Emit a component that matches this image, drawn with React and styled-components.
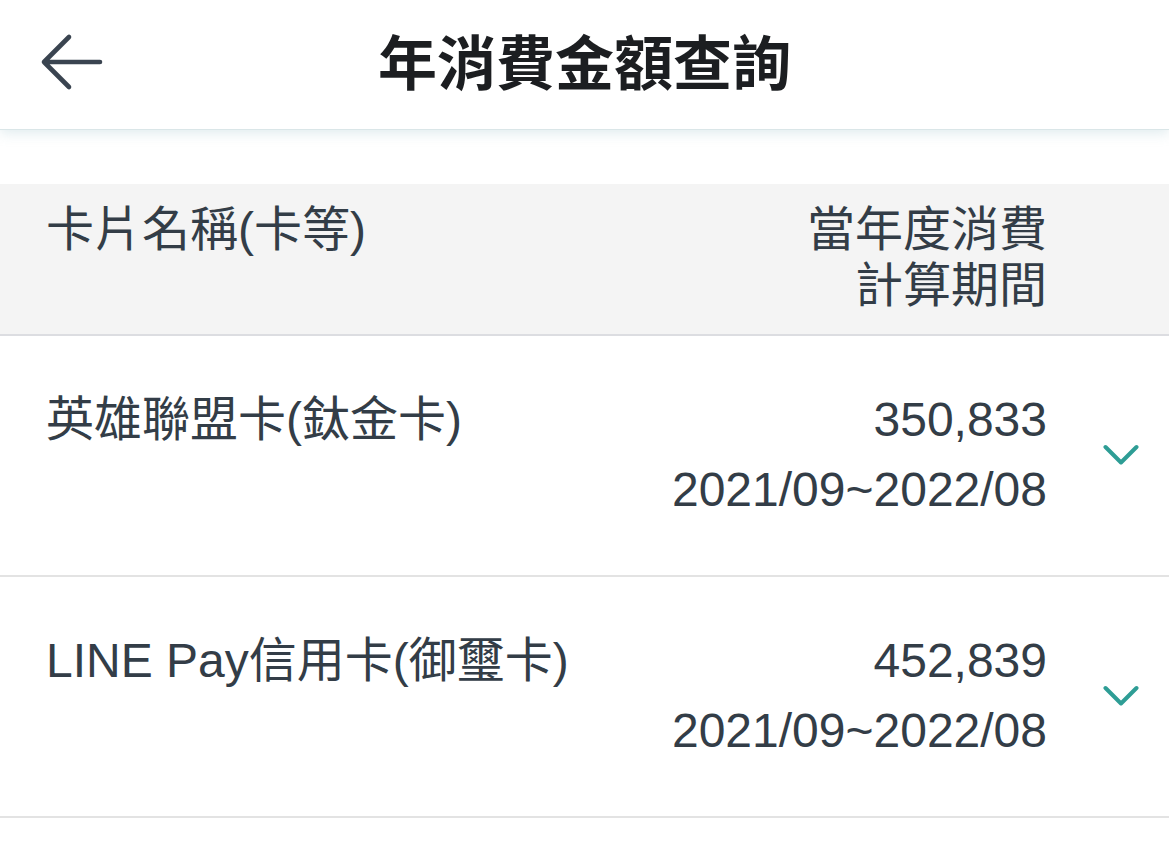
import React from 'react';
import styled, { createGlobalStyle } from 'styled-components';

const GlobalStyle = createGlobalStyle`
  html, body {
    margin: 0;
    padding: 0;
    background: #ffffff;
  }
  body {
    font-family: "Liberation Sans", "Noto Sans CJK TC", sans-serif;
    color: #333d47;
  }
`;

const Page = styled.div`
  width: 100%;
  min-height: 845px;
  background: #ffffff;
`;

const TopBar = styled.header`
  position: relative;
  z-index: 1;
  height: 129px;
  box-sizing: border-box;
  padding-bottom: 10px;
  display: grid;
  grid-template-columns: 122px 1fr 122px;
  align-items: center;
  background: #ffffff;
  box-shadow: 0 1px 0 #dae6e8, 0 4px 12px rgba(150, 190, 198, 0.3);
`;

const BackButton = styled.button`
  justify-self: start;
  margin: 4px 0 0 38px;
  padding: 0;
  border: 0;
  background: none;
  display: flex;
  cursor: pointer;
`;

const Title = styled.h1`
  margin: 0;
  text-align: center;
  font-size: 59px;
  font-weight: 700;
  color: #1c1e21;
  font-family: "Noto Sans CJK TC", sans-serif;
  line-height: 1;
`;

const Table = styled.section`
  margin-top: 55px;
`;

const HeadRow = styled.div`
  display: flex;
  align-items: flex-start;
  padding: 18px 0 20px 46px;
  background: #f4f4f4;
  border-bottom: 2px solid #dcdde1;
`;

const Row = styled.div`
  display: flex;
  align-items: center;
  padding: 56px 0 57px 46px;
  border-bottom: 2px solid #e3e3e3;
`;

const NameCell = styled.div`
  flex: 1;
  align-self: flex-start;
  font-size: 48px;
  line-height: 56px;
  white-space: nowrap;
`;

const ValueCell = styled.div`
  display: flex;
  flex-direction: column;
  align-items: flex-end;
  gap: ${({ $gap }) => $gap || 0}px;
  margin-right: -2px;
  font-size: 48px;
  line-height: 56px;
  text-align: right;
  white-space: nowrap;
`;

const ChevronCol = styled.div`
  width: 124px;
  box-sizing: border-box;
  padding-left: 58px;
  display: flex;
  align-items: center;
`;

const BackIcon = () => (
  <svg width="66" height="62" viewBox="0 0 66 62" fill="none">
    <path
      d="M62 27H6M31 2L6 27l25 25"
      stroke="#3a4450"
      strokeWidth="4.6"
      strokeLinecap="round"
      strokeLinejoin="round"
      transform="translate(0 4)"
    />
  </svg>
);

const Chevron = () => (
  <svg width="36" height="22" viewBox="0 0 36 22" fill="none">
    <path
      d="M2.5 3L18 18.5 33.5 3"
      stroke="#2e9d95"
      strokeWidth="4"
      strokeLinecap="round"
      strokeLinejoin="round"
    />
  </svg>
);

const cards = [
  { name: '英雄聯盟卡(鈦金卡)', amount: '350,833', period: '2021/09~2022/08' },
  { name: 'LINE Pay信用卡(御璽卡)', amount: '452,839', period: '2021/09~2022/08' },
];

export default function App() {
  return (
    <Page>
      <GlobalStyle />
      <TopBar>
        <BackButton aria-label="返回">
          <BackIcon />
        </BackButton>
        <Title>年消費金額查詢</Title>
        <span />
      </TopBar>
      <Table>
        <HeadRow>
          <NameCell>卡片名稱(卡等)</NameCell>
          <ValueCell>
            <span>當年度消費</span>
            <span>計算期間</span>
          </ValueCell>
          <ChevronCol />
        </HeadRow>
        {cards.map((card) => (
          <Row key={card.name}>
            <NameCell>{card.name}</NameCell>
            <ValueCell $gap={14}>
              <span>{card.amount}</span>
              <span>{card.period}</span>
            </ValueCell>
            <ChevronCol>
              <Chevron />
            </ChevronCol>
          </Row>
        ))}
      </Table>
    </Page>
  );
}
